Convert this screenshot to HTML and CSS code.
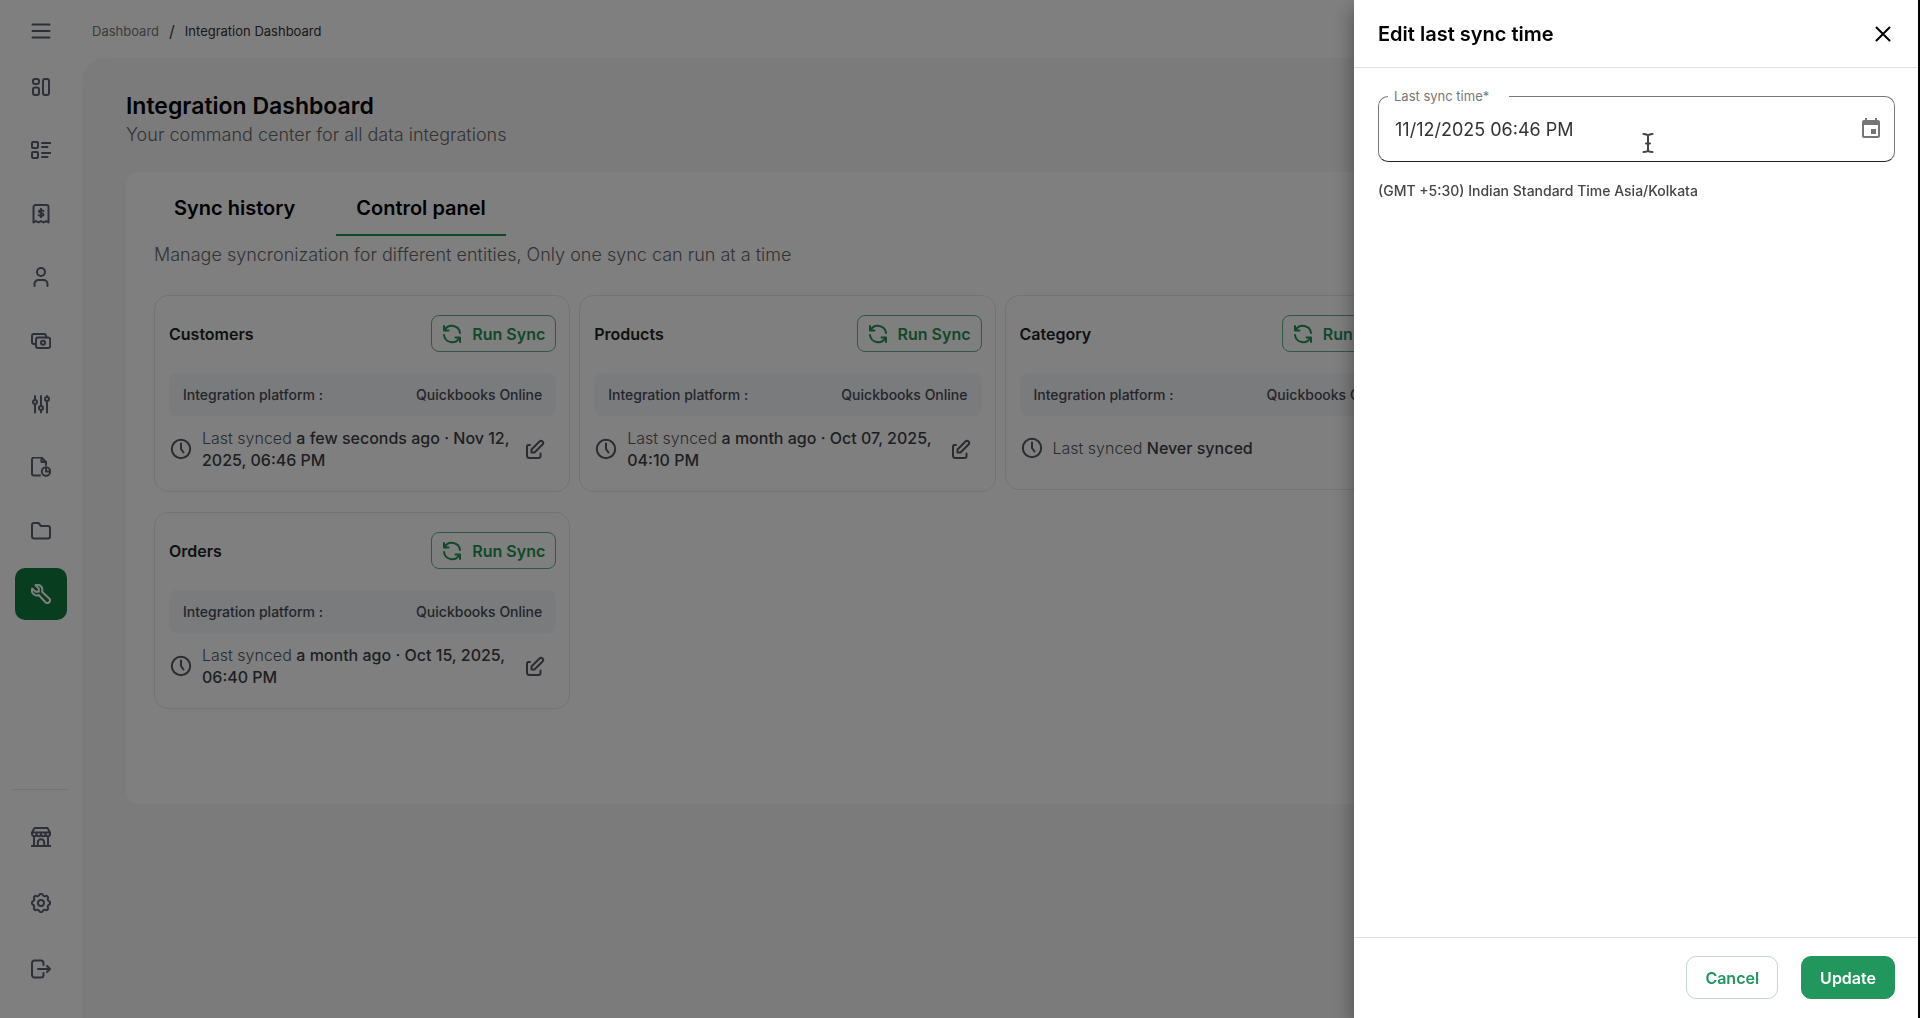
FILE: index.html
```html
<!DOCTYPE html>
<html lang="en">
<head>
  <meta charset="UTF-8" />
  <meta name="viewport" content="width=device-width, initial-scale=1" />
  <title>Integration Dashboard</title>
  <link rel="stylesheet" href="styles.css">
</head>
<body>
  <svg class="sprite" aria-hidden="true">
    <symbol id="i-sync" viewBox="0 0 20 20">
      <path d="M2 2v4.500h4.500M18 18v-4.500h-4.500M2.600 6.200A8.200 8.200 0 0 1 18 9M17.400 13.800A8.200 8.200 0 0 1 2 11"/>
    </symbol>
    <symbol id="i-clock" viewBox="0 0 22 22">
      <circle cx="11" cy="11" r="9.200"/>
      <path d="M11 5.500V11l2.500 3.500"/>
    </symbol>
    <symbol id="i-edit" viewBox="0 0 20 20">
      <path d="M5 6H3.500A1.500 1.500 0 0 0 2 7.500v9A2.500 2.500 0 0 0 4.500 19h9a2 2 0 0 0 2-2v-2.500"/>
      <path d="M6.500 13.500v-3l8-8a2 2 0 0 1 3 3l-8 8z"/>
    </symbol>
  </svg>

  <div class="app">
    <aside class="sidebar">
      <button class="menu-toggle" aria-label="Menu">
        <svg width="20" height="20" viewBox="0 0 20 20"><path d="M1.500 3.500h17M1.500 10h17M1.500 16.500h17"/></svg>
      </button>

      <nav class="nav-main">
        <a href="#" class="nav-icon" aria-label="Dashboard">
          <svg width="20" height="20" viewBox="0 0 20 20"><rect x="2" y="2" width="6" height="5" rx="2"/><rect x="2" y="10.500" width="6" height="7.500" rx="2"/><rect x="12" y="2" width="6" height="16" rx="2"/></svg>
        </a>
        <a href="#" class="nav-icon" aria-label="Catalog">
          <svg width="20" height="20" viewBox="0 0 20 20"><rect x="1" y="2" width="6" height="6" rx="1"/><rect x="1" y="12" width="6" height="6" rx="1"/><path d="M11 3h8.500M11 7h5.500M11 13h8.500M11 17h5.500"/></svg>
        </a>
        <a href="#" class="nav-icon" aria-label="Invoices">
          <svg width="20" height="20" viewBox="0 0 20 20"><path d="M2.500 18.500V3a2 2 0 0 1 2-2h11a2 2 0 0 1 2 2v15.500l-2.500-1.500-2.500 1.500L10 17l-2.500 1.500L5 17z"/><path d="M12.500 7c-.5-1-4.500-1.300-4.500.5s4.500 1 4.500 3-4 1.800-4.800.5M10 4.800v8.400"/></svg>
        </a>
        <a href="#" class="nav-icon" aria-label="Customers">
          <svg width="20" height="20" viewBox="0 0 20 20"><circle cx="10" cy="5" r="4"/><path d="M3.500 19v-2a4 4 0 0 1 4-4h5a4 4 0 0 1 4 4v2"/></svg>
        </a>
        <a href="#" class="nav-icon" aria-label="Payments">
          <svg width="20" height="20" viewBox="0 0 20 20"><rect x="5" y="6.500" width="14.200" height="10.500" rx="2"/><circle cx="12" cy="11.700" r="2"/><path d="M5 13H3a2 2 0 0 1-2-2V5a2 2 0 0 1 2-2h10a2 2 0 0 1 2 2v1.500"/></svg>
        </a>
        <a href="#" class="nav-icon" aria-label="Adjustments">
          <svg width="20" height="20" viewBox="0 0 20 20"><circle cx="4" cy="8" r="2"/><circle cx="10" cy="14" r="2"/><circle cx="16" cy="5" r="2"/><path d="M4 2v4M4 10v8.500M10 2v10M10 16v2.500M16 2v1M16 7v11.500"/></svg>
        </a>
        <a href="#" class="nav-icon" aria-label="Reports">
          <svg width="20" height="20" viewBox="0 0 20 20"><path d="M9 18.500H3a2 2 0 0 1-2-2v-14a2 2 0 0 1 2-2h7.500L15 5v3M10.500.5V5H15"/><circle cx="15" cy="14.500" r="4.200"/><path d="M15 11v3.500h3.500"/></svg>
        </a>
        <a href="#" class="nav-icon" aria-label="Files">
          <svg width="20" height="20" viewBox="0 0 20 20"><path d="M3 2h4.500L10 5h7a2 2 0 0 1 2 2v8.500a2 2 0 0 1-2 2H3a2 2 0 0 1-2-2V4a2 2 0 0 1 2-2z"/></svg>
        </a>
        <a href="#" class="nav-icon active" aria-label="Integrations">
          <svg width="20" height="20" viewBox="0 0 20 20"><path d="M4.500 1.200l3.300 3.300v3.300H4.500L1.200 4.500a5 5 0 0 0 6.500 6.500l6.800 7.200a2.300 2.300 0 0 0 3.700-3.700L11 7.700A5 5 0 0 0 4.500 1.200z"/></svg>
        </a>
      </nav>

      <div class="nav-bottom">
        <a href="#" class="nav-icon" aria-label="Store">
          <svg width="20" height="20" viewBox="0 0 20 20"><path d="M3.500 1h13L19 5.500H1zM1 5.500V7a2.200 2.200 0 0 0 4.500 0 2.200 2.200 0 0 0 4.500 0 2.200 2.200 0 0 0 4.500 0A2.200 2.200 0 0 0 19 7V5.500M3 9.500V19M17 9.500V19M.5 19h19M6.800 19v-3.500a3.200 3.200 0 0 1 6.400 0V19"/></svg>
        </a>
        <a href="#" class="nav-icon" aria-label="Settings">
          <svg width="20" height="20" viewBox="0 0 20 20"><circle cx="10" cy="10" r="3"/><path d="M8.200 2a2 2 0 0 1 3.600 0 2 2 0 0 0 2.700 1.100 1.800 1.800 0 0 1 2.400 2.400A2 2 0 0 0 18 8.200a2 2 0 0 1 0 3.600 2 2 0 0 0-1.100 2.700 1.800 1.800 0 0 1-2.400 2.400 2 2 0 0 0-2.700 1.100 2 2 0 0 1-3.600 0 2 2 0 0 0-2.700-1.100 1.800 1.800 0 0 1-2.400-2.400A2 2 0 0 0 2 11.800a2 2 0 0 1 0-3.600 2 2 0 0 0 1.100-2.700 1.800 1.800 0 0 1 2.400-2.400A2 2 0 0 0 8.200 2z"/></svg>
        </a>
        <a href="#" class="nav-icon" aria-label="Log out">
          <svg width="20" height="20" viewBox="0 0 20 20"><path d="M12.500 6V4a2.500 2.500 0 0 0-2.500-2.500H3.500A2.500 2.500 0 0 0 1 4v12a2.500 2.500 0 0 0 2.500 2.500H10a2.500 2.500 0 0 0 2.500-2.500v-2M7 10h12M16 7l3 3-3 3"/></svg>
        </a>
      </div>
    </aside>

    <div class="page">
      <header class="topbar">
        <nav class="breadcrumb">
          <a href="#">Dashboard</a>
          <span class="slash">/</span>
          <a href="#" class="current">Integration Dashboard</a>
        </nav>
      </header>

      <main class="content">
        <h1>Integration Dashboard</h1>
        <p class="subtitle">Your command center for all data integrations</p>

        <section class="panel">
          <div class="tabs" role="tablist">
            <button class="tab" role="tab" aria-selected="false">Sync history</button>
            <button class="tab active" role="tab" aria-selected="true">Control panel</button>
          </div>
          <p class="panel-text">Manage syncronization for different entities, Only one sync can run at a time</p>

          <div class="cards">
            <article class="card">
              <div class="card-head">
                <h2>Customers</h2>
                <button class="run-btn"><svg width="20" height="20"><use href="#i-sync"/></svg>Run Sync</button>
              </div>
              <div class="platform"><span>Integration platform :</span><span>Quickbooks Online</span></div>
              <div class="synced">
                <svg width="22" height="22"><use href="#i-clock"/></svg>
                <p>Last synced <strong>a few seconds ago · Nov 12, 2025, 06:46 PM</strong></p>
                <button class="edit-btn" aria-label="Edit last sync time"><svg width="20" height="20"><use href="#i-edit"/></svg></button>
              </div>
            </article>

            <article class="card">
              <div class="card-head">
                <h2>Products</h2>
                <button class="run-btn"><svg width="20" height="20"><use href="#i-sync"/></svg>Run Sync</button>
              </div>
              <div class="platform"><span>Integration platform :</span><span>Quickbooks Online</span></div>
              <div class="synced">
                <svg width="22" height="22"><use href="#i-clock"/></svg>
                <p>Last synced <strong>a month ago · Oct 07, 2025, 04:10 PM</strong></p>
                <button class="edit-btn" aria-label="Edit last sync time"><svg width="20" height="20"><use href="#i-edit"/></svg></button>
              </div>
            </article>

            <article class="card">
              <div class="card-head">
                <h2>Category</h2>
                <button class="run-btn"><svg width="20" height="20"><use href="#i-sync"/></svg>Run Sync</button>
              </div>
              <div class="platform"><span>Integration platform :</span><span>Quickbooks Online</span></div>
              <div class="synced">
                <svg width="22" height="22"><use href="#i-clock"/></svg>
                <p>Last synced <strong>Never synced</strong></p>
              </div>
            </article>

            <article class="card second-row">
              <div class="card-head">
                <h2>Orders</h2>
                <button class="run-btn"><svg width="20" height="20"><use href="#i-sync"/></svg>Run Sync</button>
              </div>
              <div class="platform"><span>Integration platform :</span><span>Quickbooks Online</span></div>
              <div class="synced">
                <svg width="22" height="22"><use href="#i-clock"/></svg>
                <p>Last synced <strong>a month ago · Oct 15, 2025, 06:40 PM</strong></p>
                <button class="edit-btn" aria-label="Edit last sync time"><svg width="20" height="20"><use href="#i-edit"/></svg></button>
              </div>
            </article>
          </div>
        </section>
      </main>
    </div>
  </div>

  <div class="backdrop"></div>

  <form class="drawer" role="dialog" aria-labelledby="drawer-title">
    <header class="drawer-header">
      <h2 id="drawer-title">Edit last sync time</h2>
      <button type="button" class="close-btn" aria-label="Close">
        <svg width="16" height="16" viewBox="0 0 16 16"><path d="M1.500 1.500l13 13M14.500 1.500l-13 13"/></svg>
      </button>
    </header>

    <div class="drawer-body">
      <div class="field">
        <label for="sync-time">Last sync time*</label>
        <input type="text" id="sync-time" value="11/12/2025 06:46 PM">
        <button type="button" class="date-btn" aria-label="Choose date">
          <svg width="24" height="24" viewBox="0 0 24 24"><path d="M17 12h-5v5h5v-5zM16 1v2H8V1H6v2H5c-1.110 0-1.990.9-1.990 2L3 19c0 1.100.89 2 2 2h14c1.100 0 2-.9 2-2V5c0-1.100-.9-2-2-2h-1V1h-2zm3 18H5V8h14v11z"/></svg>
        </button>
        <svg class="text-cursor" width="12" height="20" viewBox="0 0 12 20"><path d="M1.500 1c2.500 0 4.500.5 4.500 2.500v13c0 2-2 2.500-4.500 2.500M10.500 1C8 1 6 1.500 6 3.500v13c0 2 2 2.500 4.500 2.500M4 10.500h4"/></svg>
      </div>
      <p class="timezone">(GMT +5:30) Indian Standard Time Asia/Kolkata</p>
    </div>

    <footer class="drawer-footer">
      <button type="button" class="btn btn-outline">Cancel</button>
      <button type="submit" class="btn btn-primary">Update</button>
    </footer>
  </form>
</body>
</html>
```
FILE: styles.css
```css
* {
  box-sizing: border-box;
  margin: 0;
  padding: 0;
}

body {
  font-family: Inter, "Liberation Sans", sans-serif;
  color: #000;
  background: #fff;
}

a {
  color: inherit;
  text-decoration: none;
}

button {
  font-family: inherit;
  color: inherit;
  background: none;
  border: none;
  cursor: pointer;
}

svg {
  display: block;
  flex-shrink: 0;
  fill: none;
  stroke: currentColor;
  stroke-width: 2;
  stroke-linecap: round;
  stroke-linejoin: round;
}

.sprite {
  position: absolute;
  width: 0;
  height: 0;
}

.app {
  display: flex;
  min-height: 100vh;
  padding-right: 2px;
}

/* sidebar */
.sidebar {
  width: 82px;
  flex-shrink: 0;
  display: flex;
  flex-direction: column;
  align-items: center;
  padding: 21px 0 23px;
  color: #5b6070;
}

.nav-main {
  display: flex;
  flex-direction: column;
  justify-content: space-between;
  height: 559px;
  margin-top: 20px;
}

.nav-icon {
  width: 52px;
  height: 52px;
  border-radius: 10px;
  display: flex;
  align-items: center;
  justify-content: center;
}

.nav-icon.active {
  background: #107a40;
  color: #fff;
}

.nav-bottom {
  width: 56px;
  margin-top: auto;
  padding-top: 21px;
  border-top: 1px solid #e6e6e6;
  display: flex;
  flex-direction: column;
  align-items: center;
  gap: 14px;
}

/* page */
.page {
  flex: 1;
  min-width: 0;
  display: flex;
  flex-direction: column;
}

.topbar {
  height: 58px;
  padding: 0 10px;
  display: flex;
  align-items: center;
}

.breadcrumb {
  display: flex;
  align-items: center;
  gap: 10px;
  font-size: 13px;
  line-height: 20px;
  padding-top: 4px;
  color: #777;
}

.breadcrumb .slash {
  font-size: 16px;
  color: #444;
}

.breadcrumb .current {
  color: #333;
}

.content {
  flex: 1;
  background: #f7f7f7;
  border-top-left-radius: 24px;
  padding: 32px 44px;
}

h1 {
  font-size: 23px;
  line-height: 32px;
  font-weight: 600;
}

.subtitle,
.panel-text {
  font-size: 18px;
  line-height: 26px;
  font-weight: 300;
  color: #666;
}

.panel {
  min-height: 632px;
  margin-top: 24px;
  padding: 9px 28px 28px;
  background: #fff;
  border-radius: 12px;
}

.tabs {
  display: flex;
  gap: 21px;
}

.tab {
  height: 55px;
  padding: 0 20px;
  font-size: 20px;
  font-weight: 600;
  border-bottom: 2px solid transparent;
}

.tab.active {
  border-bottom-color: #1f9254;
}

.panel-text {
  margin-top: 6px;
}

.cards {
  display: grid;
  grid-template-columns: repeat(4, 1fr);
  gap: 20px 9px;
  align-items: start;
  margin-top: 27px;
}

.card {
  border: 1px solid #e6e6e6;
  border-radius: 14px;
  padding: 19px 13px 20px 14px;
}

.card.second-row {
  grid-column-start: 1;
}

.card-head {
  display: flex;
  justify-content: space-between;
  align-items: center;
}

.card-head h2 {
  font-size: 16px;
  line-height: 22px;
  font-weight: 600;
  color: #222;
}

.run-btn {
  height: 37px;
  padding: 0 10px;
  display: flex;
  align-items: center;
  gap: 10px;
  font-size: 16px;
  font-weight: 600;
  color: #1f9254;
  border: 1px solid #64b18a;
  border-radius: 8px;
}

.platform {
  display: flex;
  justify-content: space-between;
  align-items: center;
  height: 43px;
  margin-top: 21px;
  padding: 0 14px;
  font-size: 14px;
  font-weight: 500;
  color: #484b56;
  background: #f5f6f9;
  border-radius: 8px;
}

.synced {
  display: flex;
  align-items: center;
  min-height: 42px;
  margin-top: 11px;
  padding: 0 11px 0 1px;
  color: #55585f;
}

.synced p {
  flex: 1;
  margin: 0 10px;
  font-size: 16px;
  line-height: 22px;
  font-weight: 300;
}

.synced strong {
  font-weight: 500;
  color: #3c3f46;
}

/* drawer */
.backdrop {
  position: fixed;
  inset: 0;
  background: rgba(0, 0, 0, 0.5);
}

.drawer {
  position: fixed;
  top: 0;
  right: 0;
  bottom: 0;
  width: 566px;
  display: flex;
  flex-direction: column;
  background: #fff;
  border-right: 2px solid #000;
  box-shadow: 0 8px 20px rgba(0, 0, 0, 0.4);
}

.drawer-header {
  height: 68px;
  padding: 0 27px 0 24px;
  display: flex;
  justify-content: space-between;
  align-items: center;
  border-bottom: 1px solid #e0e0e0;
}

.drawer-header h2 {
  font-size: 20px;
  font-weight: 600;
}

.drawer-body {
  flex: 1;
  padding: 28px 23px 28px 24px;
}

.field {
  position: relative;
  display: flex;
  align-items: center;
  height: 66px;
  padding: 0 11px 0 16px;
  border: 1px solid #777;
  border-bottom-color: #222;
  border-radius: 10px;
}

.field label {
  position: absolute;
  top: -10px;
  left: 9px;
  width: 121px;
  padding-left: 6px;
  font-size: 13px;
  line-height: 18px;
  color: #777;
  background: #fff;
}

.field input {
  flex: 1;
  min-width: 0;
  font-family: inherit;
  font-size: 18px;
  font-weight: 400;
  color: #333;
  background: none;
  border: none;
  outline: none;
}

.date-btn {
  color: #757575;
}

.date-btn svg {
  fill: currentColor;
  stroke: none;
}

.text-cursor {
  position: absolute;
  left: 263px;
  top: 36px;
  color: #444;
}

.timezone {
  margin-top: 19px;
  font-size: 14px;
  line-height: 20px;
  font-weight: 500;
  color: #444;
}

.drawer-footer {
  display: flex;
  justify-content: flex-end;
  gap: 23px;
  padding: 18px 23px 19px;
  border-top: 1px solid #e0e0e0;
}

.btn {
  height: 43px;
  padding: 0 18px;
  font-size: 16px;
  font-weight: 600;
  border: 1px solid #21965d;
  border-radius: 10px;
}

.btn-outline {
  color: #21965d;
  border-color: #c4d6cd;
}

.btn-primary {
  color: #fff;
  background: #21965d;
}
```
